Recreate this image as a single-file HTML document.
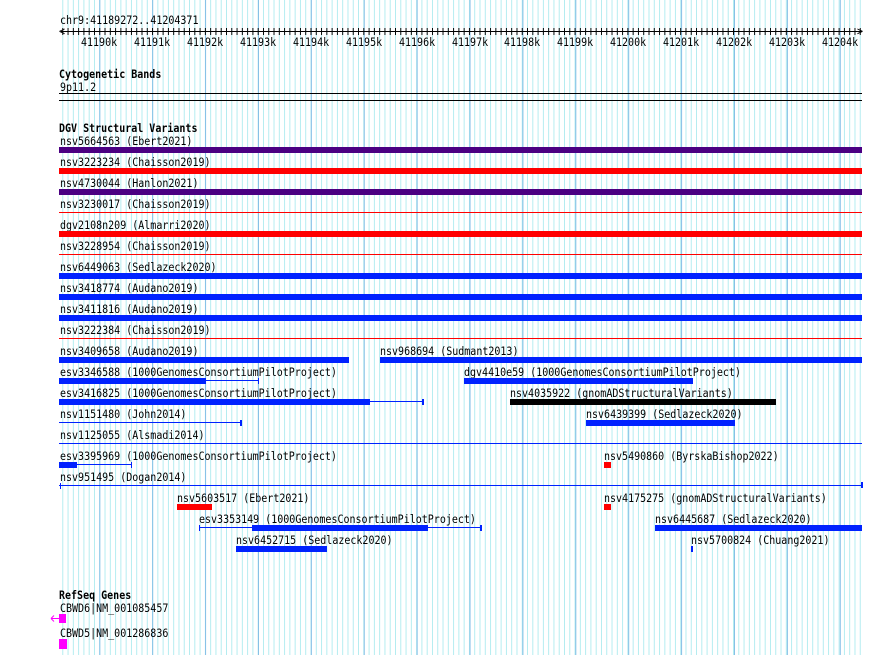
<!DOCTYPE html>
<html><head><meta charset="utf-8"><style>
*{margin:0;padding:0}
body{width:890px;height:655px;background:#fff;position:relative;overflow:hidden;font-family:"DejaVu Sans Mono","Liberation Mono",monospace;font-size:10px;line-height:11px;color:#000}
.grid{position:absolute;left:60px;top:0;width:803px;height:655px;
background-image:linear-gradient(to right,#84bfe6 0,#84bfe6 1px,transparent 1px),linear-gradient(to right,#b2ecf0 0,#b2ecf0 1px,transparent 1px);
background-size:52.9px 100%,5.29px 100%;background-position:39.3px 0,2.3px 0;}
.t{position:absolute;white-space:pre;transform:scaleY(1.12);transform-origin:0 0}
.b{font-weight:bold}
.r{position:absolute}
</style></head><body>
<div class="grid"></div>
<div class="t" style="left:60px;top:15px">chr9:41189272..41204371</div>
<div class="r" style="left:61px;top:31px;width:801px;height:1px;background:#000"></div>
<div class="r" style="left:61px;top:28px;width:801px;height:7px;background-image:linear-gradient(to right,#000 0,#000 1px,transparent 1px);background-size:5.29px 100%;background-position:1.3px 0"></div>
<div class="t" style="left:59px;top:26px">&lt;</div>
<div class="t" style="left:857px;top:26px">&gt;</div>
<div class="t" style="left:81px;top:37px">41190k</div>
<div class="t" style="left:134px;top:37px">41191k</div>
<div class="t" style="left:187px;top:37px">41192k</div>
<div class="t" style="left:240px;top:37px">41193k</div>
<div class="t" style="left:293px;top:37px">41194k</div>
<div class="t" style="left:346px;top:37px">41195k</div>
<div class="t" style="left:399px;top:37px">41196k</div>
<div class="t" style="left:452px;top:37px">41197k</div>
<div class="t" style="left:504px;top:37px">41198k</div>
<div class="t" style="left:557px;top:37px">41199k</div>
<div class="t" style="left:610px;top:37px">41200k</div>
<div class="t" style="left:663px;top:37px">41201k</div>
<div class="t" style="left:716px;top:37px">41202k</div>
<div class="t" style="left:769px;top:37px">41203k</div>
<div class="t" style="left:822px;top:37px">41204k</div>

<div class="t b" style="left:59px;top:69px">Cytogenetic Bands</div>
<div class="t" style="left:60px;top:82px">9p11.2</div>
<div class="r" style="left:59px;top:93px;width:803px;height:1px;background:#000"></div>
<div class="r" style="left:59px;top:100px;width:803px;height:1px;background:#000"></div>

<div class="t b" style="left:59px;top:123px">DGV Structural Variants</div>

<div class="t" style="left:60px;top:136px">nsv5664563 (Ebert2021)</div>
<div class="r" style="left:59px;top:147px;width:803px;height:6px;background:#4b0082"></div>
<div class="t" style="left:60px;top:157px">nsv3223234 (Chaisson2019)</div>
<div class="r" style="left:59px;top:168px;width:803px;height:6px;background:#f00"></div>
<div class="t" style="left:60px;top:178px">nsv4730044 (Hanlon2021)</div>
<div class="r" style="left:59px;top:189px;width:803px;height:6px;background:#4b0082"></div>
<div class="t" style="left:60px;top:199px">nsv3230017 (Chaisson2019)</div>
<div class="r" style="left:59px;top:212px;width:803px;height:1px;background:#f00"></div>
<div class="t" style="left:60px;top:220px">dgv2108n209 (Almarri2020)</div>
<div class="r" style="left:59px;top:231px;width:803px;height:6px;background:#f00"></div>
<div class="t" style="left:60px;top:241px">nsv3228954 (Chaisson2019)</div>
<div class="r" style="left:59px;top:254px;width:803px;height:1px;background:#f00"></div>
<div class="t" style="left:60px;top:262px">nsv6449063 (Sedlazeck2020)</div>
<div class="r" style="left:59px;top:273px;width:803px;height:6px;background:#0022ff"></div>
<div class="t" style="left:60px;top:283px">nsv3418774 (Audano2019)</div>
<div class="r" style="left:59px;top:294px;width:803px;height:6px;background:#0022ff"></div>
<div class="t" style="left:60px;top:304px">nsv3411816 (Audano2019)</div>
<div class="r" style="left:59px;top:315px;width:803px;height:6px;background:#0022ff"></div>
<div class="t" style="left:60px;top:325px">nsv3222384 (Chaisson2019)</div>
<div class="r" style="left:59px;top:338px;width:803px;height:1px;background:#f00"></div>

<div class="t" style="left:60px;top:346px">nsv3409658 (Audano2019)</div>
<div class="r" style="left:59px;top:357px;width:290px;height:6px;background:#0022ff"></div>
<div class="t" style="left:380px;top:346px">nsv968694 (Sudmant2013)</div>
<div class="r" style="left:380px;top:357px;width:482px;height:6px;background:#0022ff"></div>

<div class="t" style="left:60px;top:367px">esv3346588 (1000GenomesConsortiumPilotProject)</div>
<div class="r" style="left:59px;top:378px;width:147px;height:6px;background:#0022ff"></div>
<div class="r" style="left:206px;top:380px;width:53px;height:1px;background:#0022ff"></div>
<div class="r" style="left:258px;top:378px;width:1px;height:6px;background:#0022ff"></div>
<div class="t" style="left:464px;top:367px">dgv4410e59 (1000GenomesConsortiumPilotProject)</div>
<div class="r" style="left:464px;top:378px;width:229px;height:6px;background:#0022ff"></div>

<div class="t" style="left:60px;top:388px">esv3416825 (1000GenomesConsortiumPilotProject)</div>
<div class="r" style="left:59px;top:399px;width:311px;height:6px;background:#0022ff"></div>
<div class="r" style="left:370px;top:401px;width:54px;height:1px;background:#0022ff"></div>
<div class="r" style="left:422px;top:399px;width:2px;height:6px;background:#0022ff"></div>
<div class="t" style="left:510px;top:388px">nsv4035922 (gnomADStructuralVariants)</div>
<div class="r" style="left:510px;top:399px;width:266px;height:6px;background:#000"></div>

<div class="t" style="left:60px;top:409px">nsv1151480 (John2014)</div>
<div class="r" style="left:59px;top:422px;width:182px;height:1px;background:#0022ff"></div>
<div class="r" style="left:240px;top:420px;width:2px;height:6px;background:#0022ff"></div>
<div class="t" style="left:586px;top:409px">nsv6439399 (Sedlazeck2020)</div>
<div class="r" style="left:586px;top:420px;width:149px;height:6px;background:#0022ff"></div>

<div class="t" style="left:60px;top:430px">nsv1125055 (Alsmadi2014)</div>
<div class="r" style="left:59px;top:443px;width:803px;height:1px;background:#0022ff"></div>

<div class="t" style="left:60px;top:451px">esv3395969 (1000GenomesConsortiumPilotProject)</div>
<div class="r" style="left:59px;top:462px;width:18px;height:6px;background:#0022ff"></div>
<div class="r" style="left:77px;top:464px;width:55px;height:1px;background:#0022ff"></div>
<div class="r" style="left:131px;top:462px;width:1px;height:6px;background:#0022ff"></div>
<div class="t" style="left:604px;top:451px">nsv5490860 (ByrskaBishop2022)</div>
<div class="r" style="left:604px;top:462px;width:7px;height:6px;background:#f00"></div>

<div class="t" style="left:60px;top:472px">nsv951495 (Dogan2014)</div>
<div class="r" style="left:59px;top:485px;width:803px;height:1px;background:#0022ff"></div>
<div class="r" style="left:60px;top:483px;width:1px;height:6px;background:#0022ff"></div>
<div class="r" style="left:861px;top:482px;width:2px;height:6px;background:#0022ff"></div>

<div class="t" style="left:177px;top:493px">nsv5603517 (Ebert2021)</div>
<div class="r" style="left:177px;top:504px;width:35px;height:6px;background:#f00"></div>
<div class="t" style="left:604px;top:493px">nsv4175275 (gnomADStructuralVariants)</div>
<div class="r" style="left:604px;top:504px;width:7px;height:6px;background:#f00"></div>

<div class="t" style="left:199px;top:514px">esv3353149 (1000GenomesConsortiumPilotProject)</div>
<div class="r" style="left:199px;top:527px;width:282px;height:1px;background:#0022ff"></div>
<div class="r" style="left:199px;top:525px;width:1px;height:6px;background:#0022ff"></div>
<div class="r" style="left:480px;top:525px;width:2px;height:6px;background:#0022ff"></div>
<div class="r" style="left:252px;top:525px;width:176px;height:6px;background:#0022ff"></div>
<div class="t" style="left:655px;top:514px">nsv6445687 (Sedlazeck2020)</div>
<div class="r" style="left:655px;top:525px;width:207px;height:6px;background:#0022ff"></div>

<div class="t" style="left:236px;top:535px">nsv6452715 (Sedlazeck2020)</div>
<div class="r" style="left:236px;top:546px;width:91px;height:6px;background:#0022ff"></div>
<div class="t" style="left:691px;top:535px">nsv5700824 (Chuang2021)</div>
<div class="r" style="left:691px;top:546px;width:2px;height:6px;background:#0022ff"></div>

<div class="t b" style="left:59px;top:590px">RefSeq Genes</div>
<div class="t" style="left:60px;top:603px">CBWD6|NM_001085457</div>
<svg class="r" style="left:50px;top:614px" width="10" height="9"><path d="M1 4.5H9M1 4.5L4 1.5M1 4.5L4 7.5" stroke="#f0f" stroke-width="1" fill="none"/></svg>
<div class="r" style="left:59px;top:614px;width:7px;height:9px;background:#f0f"></div>
<div class="t" style="left:60px;top:628px">CBWD5|NM_001286836</div>
<div class="r" style="left:59px;top:639px;width:8px;height:10px;background:#f0f"></div>
</body></html>
